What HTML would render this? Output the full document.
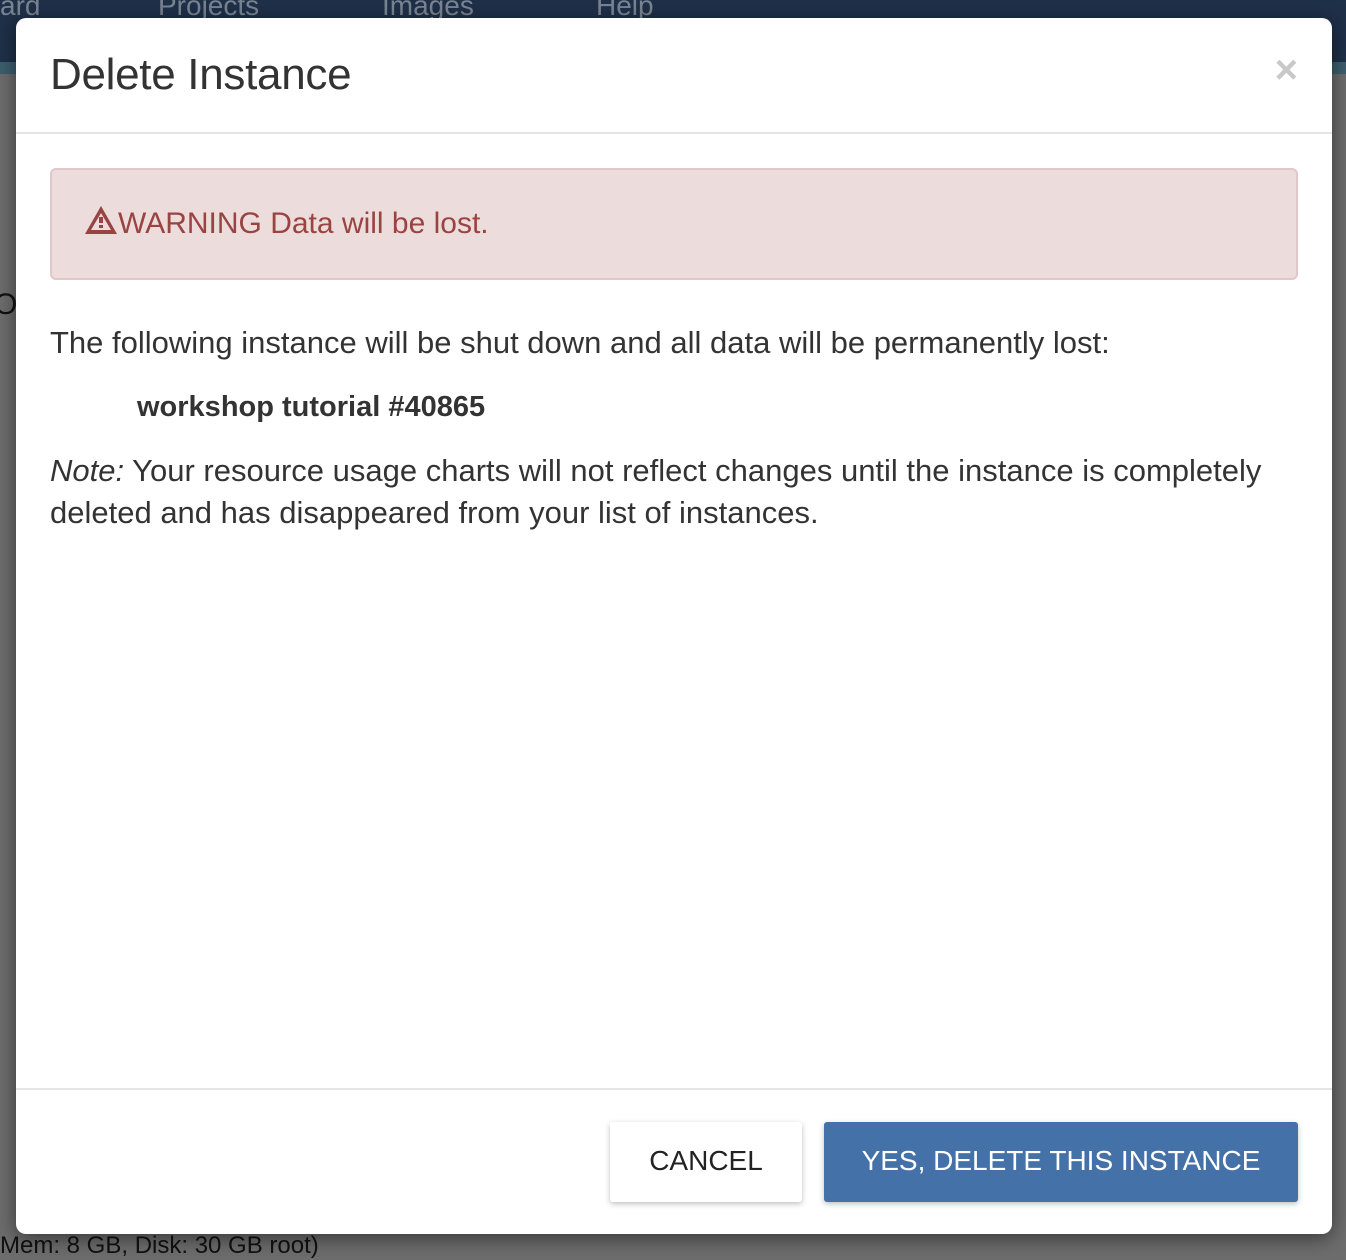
<!DOCTYPE html>
<html><head><meta charset="utf-8"><style>
html,body{margin:0;padding:0}
body{width:1346px;height:1252px;position:relative;overflow:hidden;background:#6d6d6d;font-family:"Liberation Sans",sans-serif;}
.nav{position:absolute;left:0;top:0;width:1346px;height:62px;background:#1f3049;}
.strip{position:absolute;left:0;top:62px;width:1346px;height:12px;background:#3d5f6e;}
.nav span{position:absolute;top:-10px;color:#7a8594;font-size:28px}
.bgtext{position:absolute;left:0;top:1232px;font-size:24px;color:#111}
.modal{position:absolute;left:16px;top:18px;width:1316px;height:1216px;background:#fff;border-radius:10px;box-shadow:0 4px 20px rgba(0,0,0,.5);}
.hdr{height:114px;border-bottom:2px solid #e5e5e5;position:relative}
.hdr h1{margin:0;position:absolute;left:34px;top:32px;font-weight:normal;font-size:44px;color:#333;letter-spacing:-0.3px}
.close{position:absolute;right:34px;top:30px;font-size:40px;color:#c8c8c8;font-weight:bold}
.alert{position:absolute;left:34px;top:150px;width:1248px;height:112px;background:#ecdcdc;border:2px solid #e2c6c9;border-radius:6px;box-sizing:border-box}
.alert div{position:absolute;left:32px;top:35px;font-size:30px;color:#9a4441}
p{margin:0;position:absolute;left:34px;font-size:31px;color:#333;line-height:42px}
.foot{position:absolute;left:0;top:1070px;width:1316px;border-top:2px solid #e5e5e5}
.btn{position:absolute;top:1104px;height:80px;line-height:78px;font-size:28px;text-align:center;border-radius:3px;box-shadow:0 2px 6px rgba(0,0,0,.25)}
</style></head><body>
<div class="nav"><span style="left:0">ard</span><span style="left:158px">Projects</span><span style="left:382px">Images</span><span style="left:596px">Help</span></div>
<div class="strip"></div>
<div class="bgtext">Mem: 8 GB, Disk: 30 GB root)</div>
<div style="position:absolute;left:-6px;top:288px;font-size:30px;color:#111">O</div>
<div class="modal">
 <div class="hdr"><h1>Delete Instance</h1><div class="close">×</div></div>
 <div class="alert"><div><svg width="34" height="30" viewBox="0 0 34 30" style="vertical-align:-2px"><path d="M17 1L33 29H1Z" fill="#9a4441"/><path d="M17 8L27 25H7Z" fill="#ecdcdc"/><rect x="15" y="12" width="4" height="6" fill="#9a4441"/><rect x="15" y="20" width="4" height="3" fill="#9a4441"/></svg>WARNING Data will be lost.</div></div>
 <p style="top:304px">The following instance will be shut down and all data will be permanently lost:</p>
 <p style="top:368px;left:121px;font-weight:bold;font-size:29px">workshop tutorial #40865</p>
 <p style="top:432px;width:1240px"><i>Note:</i> Your resource usage charts will not reflect changes until the instance is completely deleted and has disappeared from your list of instances.</p>
 <div class="foot"></div>
 <div class="btn" style="left:594px;width:192px;background:#fff;color:#222">CANCEL</div>
 <div class="btn" style="left:808px;width:474px;background:#4471a8;color:#fff">YES, DELETE THIS INSTANCE</div>
</div>
</body></html>
